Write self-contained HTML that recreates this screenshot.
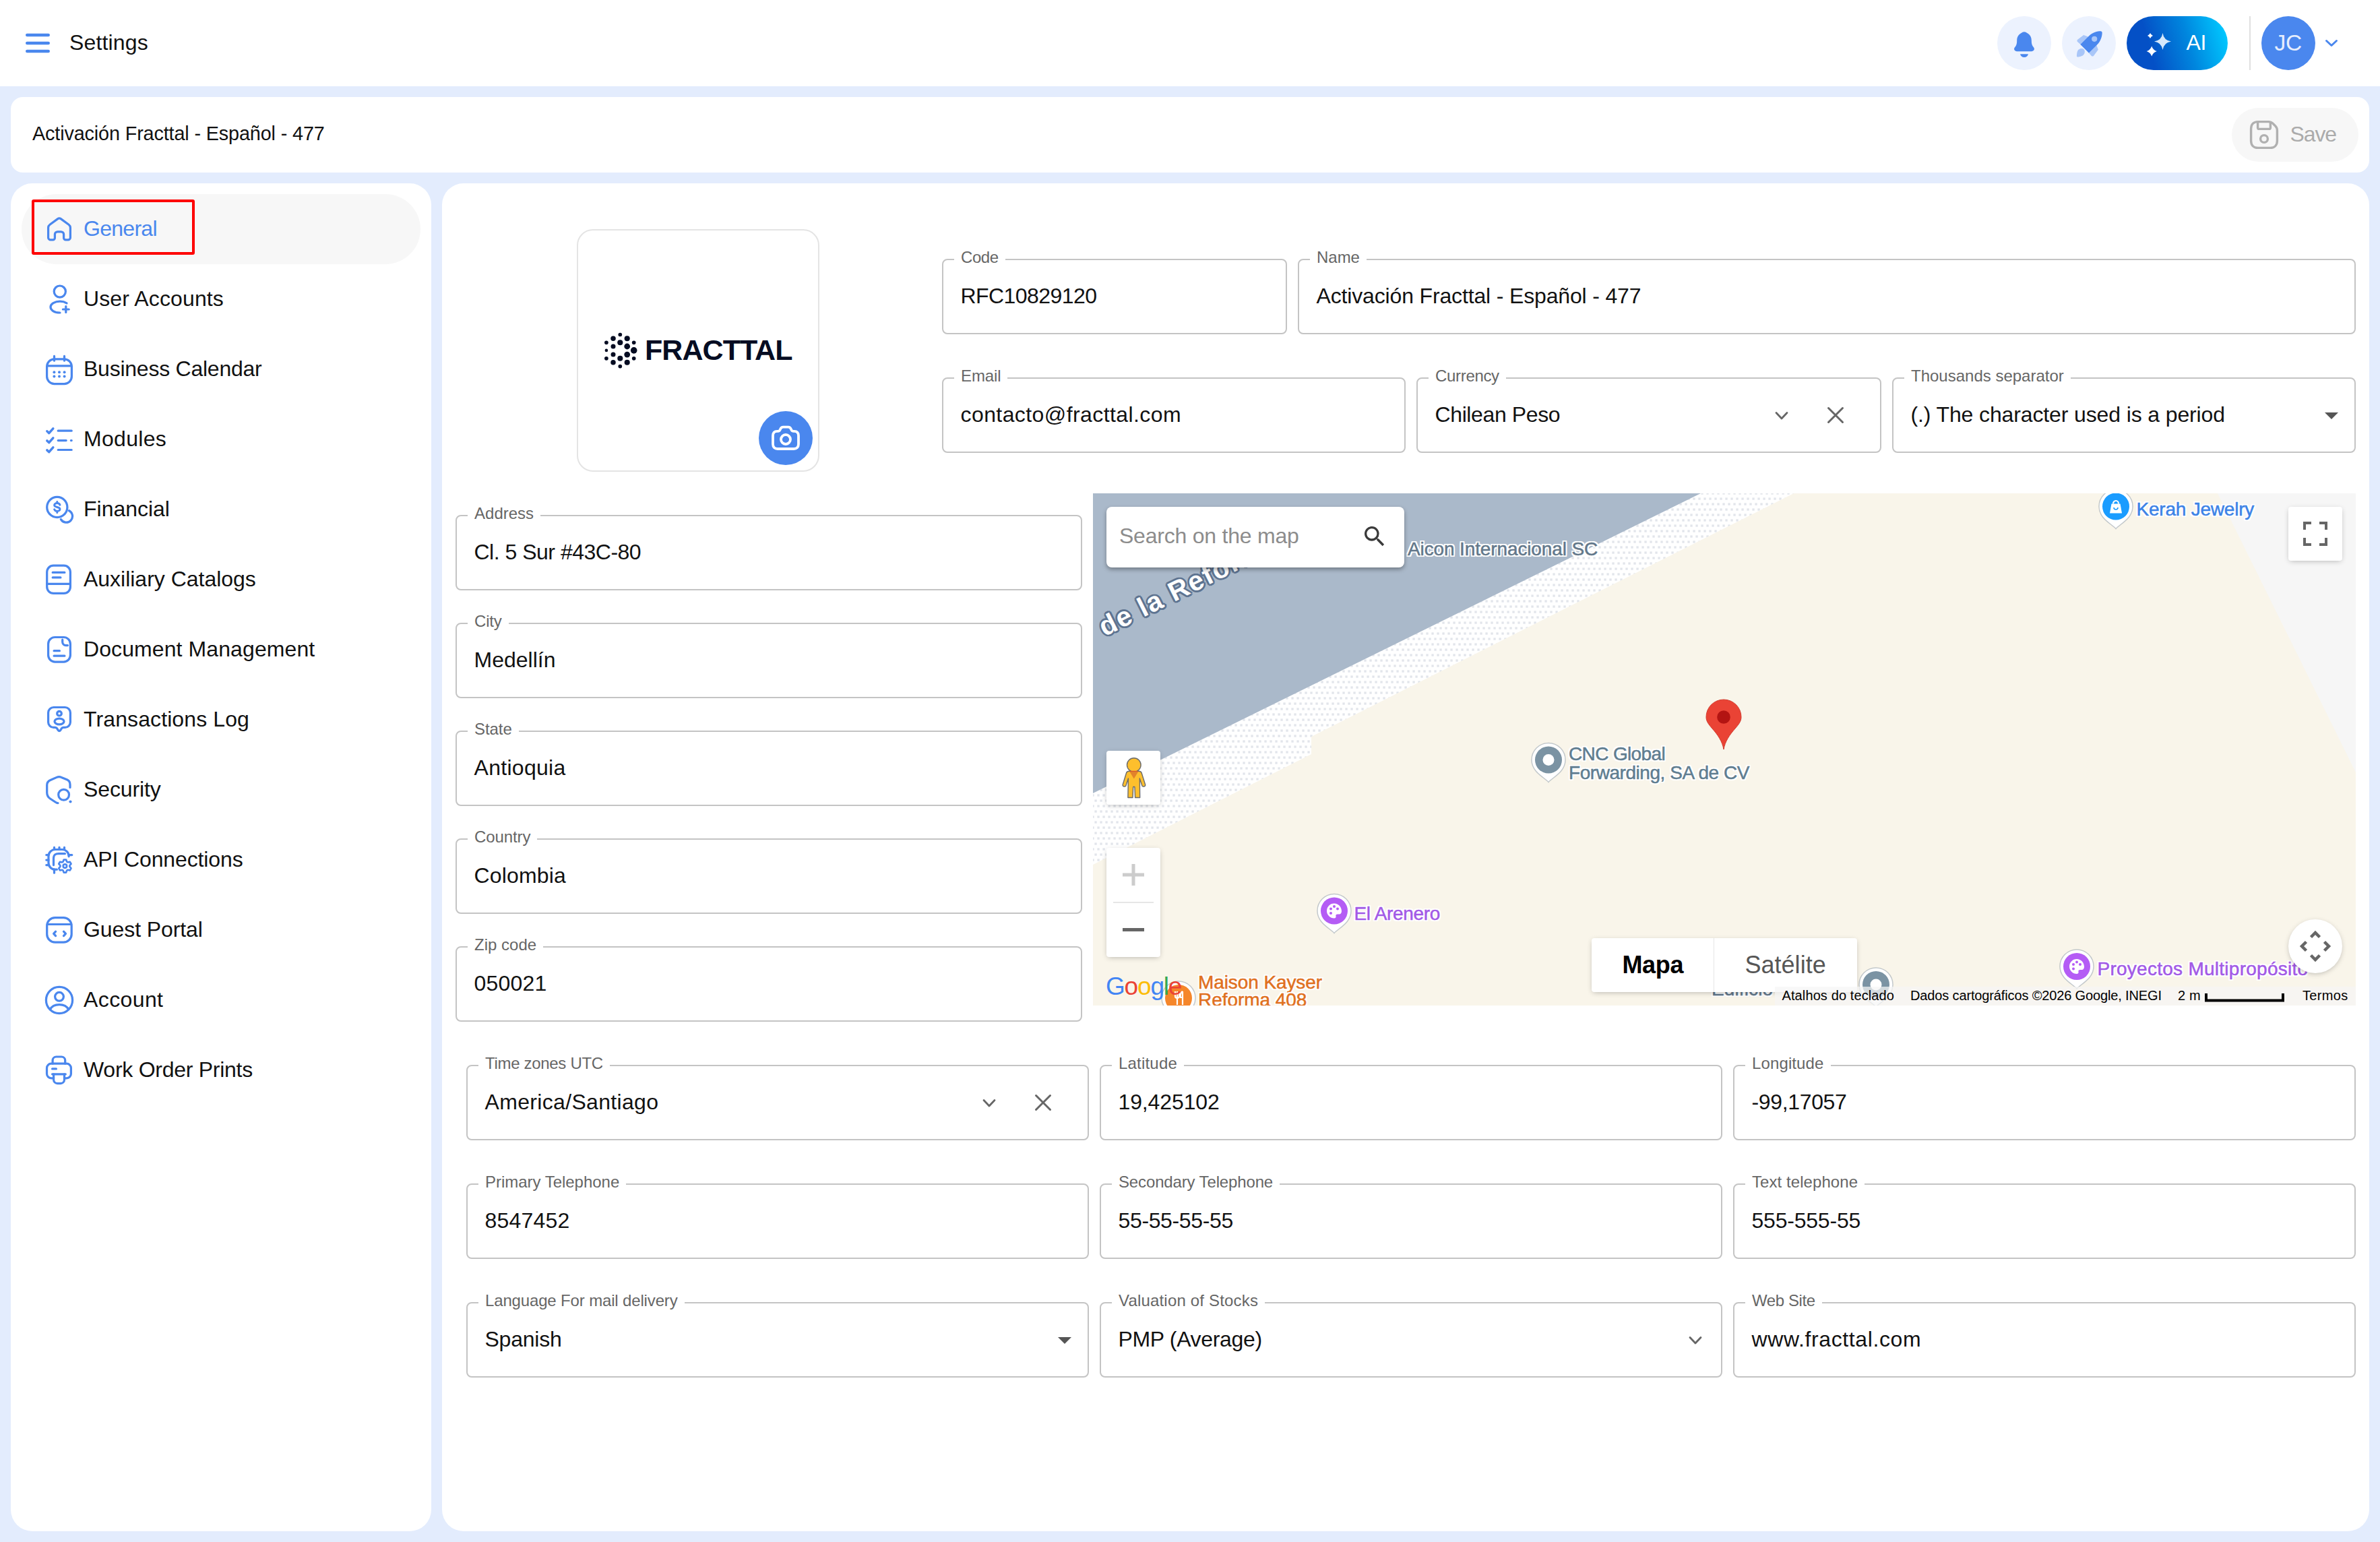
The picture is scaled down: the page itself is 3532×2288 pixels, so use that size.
<!DOCTYPE html>
<html lang="en"><head><meta charset="utf-8"><title>Settings</title>
<style>
*{box-sizing:border-box;margin:0;padding:0}
html,body{width:3532px;height:2288px;overflow:hidden;background:#e3ecfd;font-family:"Liberation Sans",sans-serif;}
.abs{position:absolute}
.t{position:absolute;white-space:pre;display:block}
.card{position:absolute;background:#fff}
.fld{position:absolute;border:2px solid #c4c4c4;border-radius:8px;height:112px}
.notch{position:absolute;background:#fff;height:6px}
svg{position:absolute;overflow:visible}
.ic{fill:none;stroke:#4a87ee;stroke-width:1.62;stroke-linecap:round;stroke-linejoin:round}
.halo{-webkit-text-stroke:0.500px currentColor;text-shadow:-2px -2px 0 #fff,2px -2px 0 #fff,-2px 2px 0 #fff,2px 2px 0 #fff,0 -2px 0 #fff,0 2px 0 #fff,-2px 0 0 #fff,2px 0 0 #fff,0 0 3px #fff}
.mbtn{position:absolute;background:#fff;box-shadow:0 2px 8px -2px rgba(0,0,0,.3);border-radius:4px}
</style></head><body>
<div class="abs" style="left:0;top:0;width:3532px;height:128px;background:#fff"></div>
<svg style="left:36px;top:46px" width="40" height="36" viewBox="0 0 40 36"><g stroke="#4a87ee" stroke-width="4.6" stroke-linecap="round"><path d="M4.3 6H35.7M4.3 18H35.7M4.3 30H35.7"/></g></svg>
<span class="t " style="left:103.0px;top:47.4px;font-size:32px;line-height:32px;color:#111; letter-spacing:0.152px;">Settings</span>
<div class="abs" style="left:2964px;top:24px;width:80px;height:80px;border-radius:50%;background:#ecf2fe"></div>
<svg style="left:2980px;top:44.500px" width="48" height="43.500" viewBox="0 0 24 24" preserveAspectRatio="none"><path fill="#4a87ee" d="M12 1.2c.9 0 1.6.5 2.2 1 2.1 1.4 3.2 3.3 3.2 6.1 0 2.400.3 3.700 1.100 4.900l.6.9c.9 1.400 0 3.100-1.700 3.100H6.600c-1.700 0-2.600-1.700-1.700-3.100l.6-.9c.8-1.200 1.100-2.500 1.100-4.900 0-2.800 1.100-4.700 3.200-6.100.6-.5 1.300-1 2.200-1z"/><path fill="#4a87ee" d="M9 19.400h6c-.3 1.600-1.500 2.700-3 2.700s-2.700-1.100-3-2.700z"/></svg>
<div class="abs" style="left:3060px;top:24px;width:80px;height:80px;border-radius:50%;background:#ecf2fe"></div>
<svg style="left:3071.500px;top:42px" width="52" height="52" viewBox="0 0 24 24">
<path fill="#a9c6f8" d="M9.300 4.600 5.200 7.700c-.5.400-.5 1.100-.1 1.500l3.100 2.800 5.800-5.700z"/>
<path fill="#a9c6f8" d="M19.300 14.600l-3.100 4.200c-.4.500-1.100.500-1.500.1l-2.800-3.100 5.700-5.800z"/>
<path fill="#a9c6f8" d="M5.600 14.800c1.300-1.300 3.100-1.200 3.900-.4.800.8.900 2.600-.4 3.900-1 1-3.500 1.300-4.100 1.300-.2 0-.4-.2-.4-.4 0-.8.100-3.400 1-4.400z"/>
<path fill="#4a87ee" d="M21.700 2.300c-.2-.2-.4-.3-.7-.3-2.200 0-5.600.8-8.100 3.300L7.100 11.100l5.800 5.800 5.800-5.800C21.200 8.600 22 5.200 22 3c0-.300-.1-.5-.3-.7z"/>
<circle cx="16.700" cy="7.300" r="1.900" fill="#a9c6f8"/></svg>
<div class="abs" style="left:3156px;top:24px;width:150px;height:80px;border-radius:40px;background:linear-gradient(74deg,#0450c6 25%,#0086de 60%,#00c8ff 95%)"></div>
<svg style="left:0;top:0" width="3532" height="128"><path fill="#d6e8fb" d="M3209.5 48.9Q3211.15 59.75 3222.0 61.4Q3211.15 63.05 3209.5 73.9Q3207.85 63.05 3197.0 61.4Q3207.85 59.75 3209.5 48.9z"/><path fill="#fff" d="M3193.2 68.4Q3195.1151999999997 74.0848 3200.7999999999997 76Q3195.1151999999997 77.9152 3193.2 83.6Q3191.2848 77.9152 3185.6 76Q3191.2848 74.0848 3193.2 68.4z"/><path fill="#fff" d="M3191 49Q3192.2 51.8 3195 53Q3192.2 54.2 3191 57Q3189.8 54.2 3187 53Q3189.8 51.8 3191 49z"/></svg>
<span class="t " style="left:3244.5px;top:46.9px;font-size:32px;line-height:32px;color:#fff; letter-spacing:-0.328px;">AI</span>
<div class="abs" style="left:3338px;top:24px;width:2px;height:80px;background:#e0e0e0"></div>
<div class="abs" style="left:3356px;top:24px;width:80px;height:80px;border-radius:50%;background:#4a87ee"></div>
<span class="t " style="left:3375.5px;top:46.8px;font-size:33.5px;line-height:33.5px;color:#e6eefd; letter-spacing:-0.328px;">JC</span>
<svg style="left:3448px;top:52px" width="24" height="24" viewBox="0 0 24 24"><path d="M4.500 8.500l7.500 7 7.500-7" fill="none" stroke="#4a87ee" stroke-width="3" stroke-linecap="round" stroke-linejoin="round"/></svg>
<div class="card" style="left:16px;top:144px;width:3500px;height:112px;border-radius:18px"></div>
<span class="t " style="left:48.0px;top:183.6px;font-size:28.8px;line-height:28.8px;color:#111; letter-spacing:-0.140px;">Activación Fracttal - Español - 477</span>
<div class="abs" style="left:3312px;top:160px;width:188px;height:80px;border-radius:40px;background:#f7f7f7"></div>
<svg style="left:3336px;top:176px" width="48" height="48" viewBox="0 0 24 24"><g fill="none" stroke="#b0b0b0" stroke-width="1.700" stroke-linejoin="round"><path d="M2.300 7.500c0-2.800 1.500-5.200 5.200-5.200h7.700c1.500 0 2.300.3 3.300 1.300l1.900 1.900c1 1 1.300 1.800 1.300 3.300v7.700c0 3.700-2.400 5.200-5.200 5.200h-9c-3.700 0-5.200-2.400-5.200-5.200z"/><path d="M7.300 2.500v4.200c0 .6.400 1 1 1h7.400c.6 0 1-.4 1-1V2.500"/><circle cx="12" cy="15" r="2.700"/></g></svg>
<span class="t " style="left:3398.5px;top:182.9px;font-size:32px;line-height:32px;color:#ababab; letter-spacing:-1.125px;">Save</span>
<div class="card" style="left:16px;top:272px;width:624px;height:2000px;border-radius:32px"></div>
<div class="abs" style="left:32px;top:288px;width:592px;height:104px;border-radius:52px;background:#f7f7f7"></div>
<div class="abs" style="left:46.500px;top:296px;width:242px;height:82px;border:4px solid #fe0000;border-radius:3px"></div>
<svg class="ic" style="left:64px;top:316px" width="48" height="48" viewBox="0 0 24 24"><path d="M10.9 4.300L5 8.600C4.200 9.200 3.800 9.900 3.800 10.900V18.200A1.750 1.750 0 0 0 5.550 19.950H7.200A1.500 1.500 0 0 0 8.700 18.450V15.900A2 2 0 0 1 10.700 13.900H13.300A2 2 0 0 1 15.300 15.900V18.450A1.500 1.500 0 0 0 16.800 19.950H18.450A1.750 1.750 0 0 0 20.200 18.200V10.900C20.200 9.900 19.800 9.200 19 8.600L13.100 4.300A1.900 1.900 0 0 0 10.900 4.300Z"/></svg>
<span class="t " style="left:124.0px;top:322.9px;font-size:32px;line-height:32px;color:#4a87ee; letter-spacing:-0.719px;">General</span>
<svg class="ic" style="left:64px;top:420px" width="48" height="48" viewBox="0 0 24 24"><circle cx="12.400" cy="6.300" r="4.300"/><path d="M17.500 14.900C16.200 14.100 14.400 13.600 12.500 13.600C8.600 13.600 5.500 15.500 5.500 17.800C5.500 20.100 8.300 22 12.500 22"/><path d="M16.900 17.300v4.400M14.700 19.500h4.400"/></svg>
<span class="t " style="left:124.0px;top:426.9px;font-size:32px;line-height:32px;color:#111; letter-spacing:0.125px;">User Accounts</span>
<svg class="ic" style="left:64px;top:524px" width="48" height="48" viewBox="0 0 24 24"><rect x="2.800" y="4.400" width="18.400" height="18.400" rx="5.500"/><path d="M8.250 5.600V2.200M15.750 5.600V2.200M3.200 9.400h17.600"/><g fill="#4a87ee" stroke="none"><circle cx="8.200" cy="14.100" r="1"/><circle cx="12" cy="14.100" r="1"/><circle cx="15.800" cy="14.100" r="1"/><circle cx="8.200" cy="17.300" r="1"/><circle cx="12" cy="17.300" r="1"/><circle cx="15.800" cy="17.300" r="1"/></g></svg>
<span class="t " style="left:124.0px;top:530.9px;font-size:32px;line-height:32px;color:#111; letter-spacing:-0.244px;">Business Calendar</span>
<svg class="ic" style="left:64px;top:628px" width="48" height="48" viewBox="0 0 24 24"><path stroke-width="1.750" d="M2.900 5.900l1.500 1.400 3-3.400M2.900 12.950l1.500 1.400 3-3.400M2.900 19.950l1.500 1.400 3-3.400"/><path d="M11.100 5.600h10M11.100 12.800h6M20.700 12.800h.4M11.100 19.750h10"/></svg>
<span class="t " style="left:124.0px;top:634.9px;font-size:32px;line-height:32px;color:#111; letter-spacing:0.312px;">Modules</span>
<svg class="ic" style="left:64px;top:732px" width="48" height="48" viewBox="0 0 24 24"><circle cx="10.400" cy="10.250" r="7.550"/><path d="M19.300 12.900A4.600 4.600 0 1 1 13.200 19.300"/><path stroke-width="1.450" d="M10.400 6.200v1M10.400 13.400v1M12.500 8.600c-.3-.85-1.100-1.350-2.100-1.350-1.200 0-2.100.65-2.100 1.550 0 2 4.200.9 4.200 2.900 0 .9-.9 1.550-2.100 1.550-1 0-1.800-.5-2.100-1.350"/></svg>
<span class="t " style="left:124.0px;top:738.9px;font-size:32px;line-height:32px;color:#111; letter-spacing:-0.014px;">Financial</span>
<svg class="ic" style="left:64px;top:836px" width="48" height="48" viewBox="0 0 24 24"><rect x="2.850" y="1.600" width="17.350" height="20.600" rx="4.800"/><path d="M7.100 6.700h8.850M7.100 10.450h5.850M2.850 15.150h17.350"/></svg>
<span class="t " style="left:124.0px;top:842.9px;font-size:32px;line-height:32px;color:#111; letter-spacing:-0.017px;">Auxiliary Catalogs</span>
<svg class="ic" style="left:64px;top:940px" width="48" height="48" viewBox="0 0 24 24"><rect x="3.800" y="2.750" width="16.400" height="18.300" rx="5"/><path d="M14.350 4.600V6.300A2.500 2.500 0 0 0 16.850 8.800H18.200M8.050 12.850h4.150M8.050 16.600h7.900"/></svg>
<span class="t " style="left:124.0px;top:946.9px;font-size:32px;line-height:32px;color:#111; letter-spacing:0.093px;">Document Management</span>
<svg class="ic" style="left:64px;top:1044px" width="48" height="48" viewBox="0 0 24 24"><path d="M7.800 2.750H16.200A4 4 0 0 1 20.200 6.750V13.700A4 4 0 0 1 16.200 17.700H15.200C14.500 17.700 14.100 17.900 13.700 18.400L12.800 19.800C12.350 20.500 11.650 20.500 11.200 19.800L10.300 18.400C9.900 17.900 9.500 17.700 8.800 17.700H7.800A4 4 0 0 1 3.800 13.700V6.750A4 4 0 0 1 7.800 2.750Z"/><circle cx="12" cy="7.350" r="1.650"/><ellipse cx="12" cy="13.250" rx="3.500" ry="2.150"/></svg>
<span class="t " style="left:124.0px;top:1050.9px;font-size:32px;line-height:32px;color:#111; letter-spacing:0.105px;">Transactions Log</span>
<svg class="ic" style="left:64px;top:1148px" width="48" height="48" viewBox="0 0 24 24"><path d="M20 10.200V8.200C20 6.200 19.600 5.300 17.900 4.550L13.600 2.700C12.300 2.100 11.400 2.100 10.100 2.700L5.400 4.800C3.700 5.550 2.850 6.600 2.850 8.500V14C2.850 16.200 3.400 17.300 5.200 18.500L9 21C9.900 21.600 10.400 21.800 11 21.800"/><circle cx="15.300" cy="15.650" r="3.950"/><path stroke-width="2.100" d="M20.250 20.750h.01"/></svg>
<span class="t " style="left:124.0px;top:1154.9px;font-size:32px;line-height:32px;color:#111; letter-spacing:-0.125px;">Security</span>
<svg class="ic" style="left:64px;top:1252px" width="48" height="48" viewBox="0 0 24 24"><path d="M19.050 9.400V9.250A5 5 0 0 0 14.050 4.250H9A5 5 0 0 0 4 9.250V14.100A5 5 0 0 0 9 19.100H10.200"/><path d="M8.250 4.250V2.650M12 4.250V2.650M15.750 4.250V2.650M4 8.300H2.400M4 12.050H2.400M4 15.800H2.400M8.250 19.100v2.500M19.050 8.300h2.350"/><path d="M16.200 7.350H11.500C8.800 7.350 7.750 8.400 7.750 11V15.800"/><circle cx="16.200" cy="16.550" r="1.350" stroke-width="1.350"/><path stroke-width="1.350" d="M14.81 13.28L15.36 11.77L17.04 11.77L17.59 13.28L18.34 13.71L19.92 13.43L20.76 14.89L19.72 16.12L19.72 16.98L20.76 18.21L19.92 19.67L18.34 19.39L17.59 19.82L17.04 21.33L15.36 21.33L14.81 19.82L14.06 19.39L12.48 19.67L11.64 18.21L12.68 16.98L12.68 16.12L11.64 14.89L12.48 13.43L14.06 13.71z"/></svg>
<span class="t " style="left:124.0px;top:1258.9px;font-size:32px;line-height:32px;color:#111; letter-spacing:-0.122px;">API Connections</span>
<svg class="ic" style="left:64px;top:1356px" width="48" height="48" viewBox="0 0 24 24"><rect x="2.850" y="2.850" width="18.250" height="18.250" rx="6"/><path d="M3.200 7.750h17.600M9.300 13.100L7.800 14.700l1.500 1.600M15.250 13.100l1.500 1.600-1.500 1.600"/></svg>
<span class="t " style="left:124.0px;top:1362.9px;font-size:32px;line-height:32px;color:#111; letter-spacing:-0.085px;">Guest Portal</span>
<svg class="ic" style="left:64px;top:1460px" width="48" height="48" viewBox="0 0 24 24"><circle cx="12" cy="12" r="9.800"/><circle cx="12" cy="9.400" r="3.200"/><path d="M5.200 18.900C6.300 16.700 8.900 15.300 12 15.300s5.700 1.400 6.800 3.600"/></svg>
<span class="t " style="left:124.0px;top:1466.9px;font-size:32px;line-height:32px;color:#111; letter-spacing:0.397px;">Account</span>
<svg class="ic" style="left:64px;top:1564px" width="48" height="48" viewBox="0 0 24 24"><path d="M7.800 17.900H6.050A3.300 3.300 0 0 1 2.750 14.600V10.400A3.300 3.300 0 0 1 6.050 7.100H17.400A3.300 3.300 0 0 1 20.700 10.400V14.600A3.300 3.300 0 0 1 17.400 17.900H15.750"/><path d="M7.050 7.100V4.700A2.700 2.700 0 0 1 9.750 2H13.650A2.700 2.700 0 0 1 16.350 4.700V7.100"/><path d="M7.800 14.900V19A2.800 2.800 0 0 0 10.600 21.800H12.950A2.800 2.800 0 0 0 15.750 19V14.900"/><path d="M6.800 14.900H16.650M6.800 10.950H9.700"/></svg>
<span class="t " style="left:124.0px;top:1570.9px;font-size:32px;line-height:32px;color:#111; letter-spacing:-0.263px;">Work Order Prints</span>
<div class="card" style="left:656px;top:272px;width:2860px;height:2000px;border-radius:32px"></div>
<div class="abs" style="left:856px;top:340px;width:360px;height:360px;border:2px solid #e4e4e4;border-radius:24px;background:#fff"></div>
<svg style="left:0;top:0" width="3532" height="2288" pointer-events="none"><circle cx="899.9" cy="508.3" r="2.85" fill="#050c22"/><circle cx="899.9" cy="519.9" r="2.30" fill="#050c22"/><circle cx="899.9" cy="531.8" r="2.85" fill="#050c22"/><circle cx="910.0" cy="502.2" r="3.75" fill="#050c22"/><circle cx="910.0" cy="514.0" r="3.50" fill="#050c22"/><circle cx="910.0" cy="526.1" r="3.50" fill="#050c22"/><circle cx="910.0" cy="537.8" r="3.75" fill="#050c22"/><circle cx="920.3" cy="496.5" r="2.85" fill="#050c22"/><circle cx="920.3" cy="508.3" r="4.05" fill="#050c22"/><circle cx="920.3" cy="531.8" r="4.05" fill="#050c22"/><circle cx="920.3" cy="543.6" r="2.85" fill="#050c22"/><circle cx="930.7" cy="502.2" r="4.05" fill="#050c22"/><circle cx="930.7" cy="514.0" r="4.40" fill="#050c22"/><circle cx="930.7" cy="526.1" r="4.40" fill="#050c22"/><circle cx="930.7" cy="537.8" r="4.05" fill="#050c22"/><circle cx="940.7" cy="508.3" r="2.85" fill="#050c22"/><circle cx="940.7" cy="519.9" r="4.80" fill="#050c22"/><circle cx="940.7" cy="531.8" r="2.85" fill="#050c22"/></svg>
<span class="t" style="left:957px;top:498.2px;font-size:43px;line-height:43px;font-weight:700;color:#050c22;letter-spacing:-0.950px">FRACTTAL</span>
<div class="abs" style="left:1126px;top:610px;width:80px;height:80px;border-radius:50%;background:#4a87ee"></div>
<svg style="left:1142px;top:626px" width="48" height="48" viewBox="0 0 24 24"><g fill="none" stroke="#fff" stroke-width="1.900" stroke-linejoin="round" stroke-linecap="round"><path d="M2.500 10.200c0-2 1.100-3.300 3.100-3.300h.6c.7 0 1.300-.4 1.600-1l.3-.7c.4-.9 1-1.400 2-1.400h3.800c1 0 1.600.5 2 1.400l.3.700c.3.600.9 1 1.600 1h.6c2 0 3.100 1.300 3.100 3.300v6.300c0 2.200-1.300 3.500-3.500 3.500H6c-2.200 0-3.500-1.300-3.500-3.500z"/><circle cx="12" cy="13" r="3.500"/></g></svg>
<div class="fld" style="left:1398px;top:384px;width:512px"></div>
<div class="notch" style="left:1416px;top:382px;width:75.6px"></div>
<span class="t " style="left:1426.0px;top:369.7px;font-size:24px;line-height:24px;color:#666; letter-spacing:-0.449px;">Code</span>
<span class="t " style="left:1425.5px;top:422.9px;font-size:32px;line-height:32px;color:#111; letter-spacing:-0.548px;">RFC10829120</span>
<div class="fld" style="left:1926px;top:384px;width:1570px"></div>
<div class="notch" style="left:1944px;top:382px;width:84.0px"></div>
<span class="t " style="left:1954.0px;top:369.7px;font-size:24px;line-height:24px;color:#666; letter-spacing:-0.020px;">Name</span>
<span class="t " style="left:1953.5px;top:422.9px;font-size:32px;line-height:32px;color:#111; letter-spacing:-0.155px;">Activación Fracttal - Español - 477</span>
<div class="fld" style="left:1398px;top:560px;width:688px"></div>
<div class="notch" style="left:1416px;top:558px;width:79.4px"></div>
<span class="t " style="left:1426.0px;top:545.7px;font-size:24px;line-height:24px;color:#666; letter-spacing:-0.119px;">Email</span>
<span class="t " style="left:1425.5px;top:598.9px;font-size:32px;line-height:32px;color:#111; letter-spacing:0.416px;">contacto@fracttal.com</span>
<div class="fld" style="left:2102px;top:560px;width:690px"></div>
<div class="notch" style="left:2120px;top:558px;width:114.8px"></div>
<span class="t " style="left:2130.0px;top:545.7px;font-size:24px;line-height:24px;color:#666; letter-spacing:-0.320px;">Currency</span>
<span class="t " style="left:2129.5px;top:598.9px;font-size:32px;line-height:32px;color:#111; letter-spacing:-0.385px;">Chilean Peso</span>
<svg style="left:2632.0px;top:609.0px" width="24" height="16" viewBox="0 0 24 16"><path d="M4 3.500l8 8.500 8-8.500" fill="none" stroke="#666" stroke-width="2.800" stroke-linecap="round" stroke-linejoin="round"/></svg>
<svg style="left:2710.0px;top:602.0px" width="28" height="28" viewBox="0 0 28 28"><path d="M3.500 3.500l21 21M24.500 3.500l-21 21" fill="none" stroke="#666" stroke-width="3" stroke-linecap="round"/></svg>
<div class="fld" style="left:2808px;top:560px;width:688px"></div>
<div class="notch" style="left:2826px;top:558px;width:246.8px"></div>
<span class="t " style="left:2836.0px;top:545.7px;font-size:24px;line-height:24px;color:#666; letter-spacing:0.001px;">Thousands separator</span>
<span class="t " style="left:2835.5px;top:598.9px;font-size:32px;line-height:32px;color:#111; letter-spacing:-0.128px;">(.) The character used is a period</span>
<svg style="left:3450.0px;top:612.0px" width="20" height="10" viewBox="0 0 20 10"><path d="M0 0h20L10 10z" fill="#555"/></svg>
<div class="fld" style="left:676px;top:764px;width:930px"></div>
<div class="notch" style="left:694px;top:762px;width:108.1px"></div>
<span class="t " style="left:704.0px;top:749.7px;font-size:24px;line-height:24px;color:#666; letter-spacing:0.013px;">Address</span>
<span class="t " style="left:703.5px;top:802.9px;font-size:32px;line-height:32px;color:#111; letter-spacing:-0.499px;">Cl. 5 Sur #43C-80</span>
<div class="fld" style="left:676px;top:924px;width:930px"></div>
<div class="notch" style="left:694px;top:922px;width:60.7px"></div>
<span class="t " style="left:704.0px;top:909.7px;font-size:24px;line-height:24px;color:#666; letter-spacing:-0.168px;">City</span>
<span class="t " style="left:703.5px;top:962.9px;font-size:32px;line-height:32px;color:#111; letter-spacing:0.016px;">Medellín</span>
<div class="fld" style="left:676px;top:1084px;width:930px"></div>
<div class="notch" style="left:694px;top:1082px;width:75.7px"></div>
<span class="t " style="left:704.0px;top:1069.7px;font-size:24px;line-height:24px;color:#666; letter-spacing:-0.062px;">State</span>
<span class="t " style="left:703.5px;top:1122.9px;font-size:32px;line-height:32px;color:#111; letter-spacing:0.292px;">Antioquia</span>
<div class="fld" style="left:676px;top:1244px;width:930px"></div>
<div class="notch" style="left:694px;top:1242px;width:103.3px"></div>
<span class="t " style="left:704.0px;top:1229.7px;font-size:24px;line-height:24px;color:#666; letter-spacing:-0.100px;">Country</span>
<span class="t " style="left:703.5px;top:1282.9px;font-size:32px;line-height:32px;color:#111; letter-spacing:0.145px;">Colombia</span>
<div class="fld" style="left:676px;top:1404px;width:930px"></div>
<div class="notch" style="left:694px;top:1402px;width:112.2px"></div>
<span class="t " style="left:704.0px;top:1389.7px;font-size:24px;line-height:24px;color:#666; letter-spacing:0.012px;">Zip code</span>
<span class="t " style="left:703.5px;top:1442.9px;font-size:32px;line-height:32px;color:#111; letter-spacing:0.188px;">050021</span>
<div class="fld" style="left:692px;top:1580px;width:924px"></div>
<div class="notch" style="left:710px;top:1578px;width:194.8px"></div>
<span class="t " style="left:720.0px;top:1565.7px;font-size:24px;line-height:24px;color:#666; letter-spacing:-0.311px;">Time zones UTC</span>
<span class="t " style="left:719.5px;top:1618.9px;font-size:32px;line-height:32px;color:#111; letter-spacing:0.329px;">America/Santiago</span>
<svg style="left:1456.0px;top:1629.0px" width="24" height="16" viewBox="0 0 24 16"><path d="M4 3.500l8 8.500 8-8.500" fill="none" stroke="#666" stroke-width="2.800" stroke-linecap="round" stroke-linejoin="round"/></svg>
<svg style="left:1534.0px;top:1622.0px" width="28" height="28" viewBox="0 0 28 28"><path d="M3.500 3.500l21 21M24.500 3.500l-21 21" fill="none" stroke="#666" stroke-width="3" stroke-linecap="round"/></svg>
<div class="fld" style="left:1632px;top:1580px;width:924px"></div>
<div class="notch" style="left:1650px;top:1578px;width:107.0px"></div>
<span class="t " style="left:1660.0px;top:1565.7px;font-size:24px;line-height:24px;color:#666; letter-spacing:0.201px;">Latitude</span>
<span class="t " style="left:1659.5px;top:1618.9px;font-size:32px;line-height:32px;color:#111; letter-spacing:-0.122px;">19,425102</span>
<div class="fld" style="left:2572px;top:1580px;width:924px"></div>
<div class="notch" style="left:2590px;top:1578px;width:126.5px"></div>
<span class="t " style="left:2600.0px;top:1565.7px;font-size:24px;line-height:24px;color:#666; letter-spacing:0.122px;">Longitude</span>
<span class="t " style="left:2599.5px;top:1618.9px;font-size:32px;line-height:32px;color:#111; letter-spacing:-0.344px;">-99,17057</span>
<div class="fld" style="left:692px;top:1756px;width:924px"></div>
<div class="notch" style="left:710px;top:1754px;width:219.2px"></div>
<span class="t " style="left:720.0px;top:1741.7px;font-size:24px;line-height:24px;color:#666; letter-spacing:-0.027px;">Primary Telephone</span>
<span class="t " style="left:719.5px;top:1794.9px;font-size:32px;line-height:32px;color:#111; letter-spacing:0.188px;">8547452</span>
<div class="fld" style="left:1632px;top:1756px;width:924px"></div>
<div class="notch" style="left:1650px;top:1754px;width:249.1px"></div>
<span class="t " style="left:1660.0px;top:1741.7px;font-size:24px;line-height:24px;color:#666; letter-spacing:-0.141px;">Secondary Telephone</span>
<span class="t " style="left:1659.5px;top:1794.9px;font-size:32px;line-height:32px;color:#111; letter-spacing:-0.358px;">55-55-55-55</span>
<div class="fld" style="left:2572px;top:1756px;width:924px"></div>
<div class="notch" style="left:2590px;top:1754px;width:177.1px"></div>
<span class="t " style="left:2600.0px;top:1741.7px;font-size:24px;line-height:24px;color:#666; letter-spacing:0.070px;">Text telephone</span>
<span class="t " style="left:2599.5px;top:1794.9px;font-size:32px;line-height:32px;color:#111; letter-spacing:-0.212px;">555-555-55</span>
<div class="fld" style="left:692px;top:1932px;width:924px"></div>
<div class="notch" style="left:710px;top:1930px;width:305.5px"></div>
<span class="t " style="left:720.0px;top:1917.7px;font-size:24px;line-height:24px;color:#666; letter-spacing:-0.153px;">Language For mail delivery</span>
<span class="t " style="left:719.5px;top:1970.9px;font-size:32px;line-height:32px;color:#111; letter-spacing:-0.239px;">Spanish</span>
<svg style="left:1570.0px;top:1984.0px" width="20" height="10" viewBox="0 0 20 10"><path d="M0 0h20L10 10z" fill="#555"/></svg>
<div class="fld" style="left:1632px;top:1932px;width:924px"></div>
<div class="notch" style="left:1650px;top:1930px;width:227.2px"></div>
<span class="t " style="left:1660.0px;top:1917.7px;font-size:24px;line-height:24px;color:#666; letter-spacing:0.183px;">Valuation of Stocks</span>
<span class="t " style="left:1659.5px;top:1970.9px;font-size:32px;line-height:32px;color:#111; letter-spacing:-0.332px;">PMP (Average)</span>
<svg style="left:2504.0px;top:1981.0px" width="24" height="16" viewBox="0 0 24 16"><path d="M4 3.500l8 8.500 8-8.500" fill="none" stroke="#666" stroke-width="2.800" stroke-linecap="round" stroke-linejoin="round"/></svg>
<div class="fld" style="left:2572px;top:1932px;width:924px"></div>
<div class="notch" style="left:2590px;top:1930px;width:113.8px"></div>
<span class="t " style="left:2600.0px;top:1917.7px;font-size:24px;line-height:24px;color:#666; letter-spacing:-0.398px;">Web Site</span>
<span class="t " style="left:2599.5px;top:1970.9px;font-size:32px;line-height:32px;color:#111; letter-spacing:0.621px;">www.fracttal.com</span>
<div class="abs" id="map" style="left:1622px;top:732px;width:1874px;height:760px;overflow:hidden;background:#f9f5ea">
<svg style="left:0;top:0" width="1874" height="760" viewBox="1622 732 1874 760"><defs><pattern id="dots" x="1620" y="730" width="8" height="16" patternUnits="userSpaceOnUse"><rect width="8" height="16" fill="#fff"/><rect x="0.400" y="0.400" width="3.300" height="3.300" fill="#e2e5eb"/><rect x="4.400" y="8.400" width="3.300" height="3.300" fill="#e2e5eb"/></pattern></defs><polygon points="1622,732 2662,732 1946,1093 1946,1119 1622,1283" fill="url(#dots)"/><polygon points="1622,732 2524,732 1622,1177" fill="#aab9ca"/><polygon points="3291,732 3496,732 3496,1146" fill="#f6f6f6"/></svg>
<span class="t" style="left:20px;top:178px;font-size:40.500px;line-height:40px;font-weight:700;color:#fff;transform-origin:0 100%;transform:rotate(-26.500deg);letter-spacing:1.900px;text-shadow:-2px -2px 0 #5d7390,2px -2px 0 #5d7390,-2px 2px 0 #5d7390,2px 2px 0 #5d7390,0 -3px 0 #5d7390,0 3px 0 #5d7390,-3px 0 0 #5d7390,3px 0 0 #5d7390">de la Reforma</span>
<span class="t halo" style="left:918.0px;top:722.3px;font-size:28px;line-height:28px;color:#62778a; letter-spacing:0.119px;">Edificio</span>
</div>
<svg style="left:1622px;top:732px" width="1874" height="760" viewBox="1622 732 1874 760"><clipPath id="mc"><rect x="1622" y="732" width="1874" height="760"/></clipPath><g clip-path="url(#mc)"><g transform="translate(3140 751.5)"><path d="M0 33C-6 26 -25 18 -25 0A25 25 0 1 1 25 0C25 18 6 26 0 33z" fill="#fff" stroke="rgba(90,110,130,.35)" stroke-width="1.500"/><circle r="20" fill="#1a9cff"/><path d="M-9 10L-6.500-4h13L9 10z" fill="#fff"/><path d="M-4-4a4 4.500 0 0 1 8 0" fill="none" stroke="#fff" stroke-width="2.200"/><path d="M-3 1.500a3 3 0 0 0 6 0" fill="none" stroke="#1a9cff" stroke-width="1.600"/></g><g transform="translate(2298 1127.5)"><path d="M0 33C-6 26 -25 18 -25 0A25 25 0 1 1 25 0C25 18 6 26 0 33z" fill="#fff" stroke="rgba(90,110,130,.35)" stroke-width="1.500"/><circle r="20" fill="#7b93a3"/><circle r="8.500" fill="#fff"/></g><g transform="translate(1980 1351.5)"><path d="M0 33C-6 26 -25 18 -25 0A25 25 0 1 1 25 0C25 18 6 26 0 33z" fill="#fff" stroke="rgba(90,110,130,.35)" stroke-width="1.500"/><circle r="20" fill="#b45cf5"/><g fill="#fff"><path d="M0-11a11 11 0 1 0 0 22c2 0 3-1.500 2.500-3-.5-1.800.5-3 2.500-3h2.500c2 0 3.500-2 3.500-4.500C11-6 6-11 0-11z"/></g><g fill="#b45cf5"><circle cx="-5" cy="-3" r="2"/><circle cx="0" cy="-6.500" r="2"/><circle cx="5" cy="-3" r="2"/><circle cx="-5" cy="3.500" r="2"/></g></g><g transform="translate(3082 1434)"><path d="M0 33C-6 26 -25 18 -25 0A25 25 0 1 1 25 0C25 18 6 26 0 33z" fill="#fff" stroke="rgba(90,110,130,.35)" stroke-width="1.500"/><circle r="20" fill="#b45cf5"/><g fill="#fff"><path d="M0-11a11 11 0 1 0 0 22c2 0 3-1.500 2.500-3-.5-1.800.5-3 2.500-3h2.500c2 0 3.500-2 3.500-4.500C11-6 6-11 0-11z"/></g><g fill="#b45cf5"><circle cx="-5" cy="-3" r="2"/><circle cx="0" cy="-6.500" r="2"/><circle cx="5" cy="-3" r="2"/><circle cx="-5" cy="3.500" r="2"/></g></g><g transform="translate(2784 1461)"><path d="M0 33C-6 26 -25 18 -25 0A25 25 0 1 1 25 0C25 18 6 26 0 33z" fill="#fff" stroke="rgba(90,110,130,.35)" stroke-width="1.500"/><circle r="20" fill="#7b93a3"/><circle r="8.500" fill="#fff"/></g><g transform="translate(1749 1481)"><path d="M0 33C-6 26 -25 18 -25 0A25 25 0 1 1 25 0C25 18 6 26 0 33z" fill="#fff" stroke="rgba(90,110,130,.35)" stroke-width="1.500"/><circle r="20" fill="#f5862a"/><path d="M-5-10v7a3 3 0 0 0 6 0v-7M-2-10v20M6-10v20M6-10c-3 1-3.500 6-3 9h3" fill="none" stroke="#fff" stroke-width="2.200"/></g><g transform="translate(2558 1112)"><path d="M0 0C-2-12-9-22-17-31C-23-38-26-42-26-48.200A26 25.800 0 0 1 26-48.200C26-42 23-38 17-31C9-22 2-12 0 0z" fill="#ea4335" stroke="#d23c2f" stroke-width="1"/><circle cy="-48" r="9.800" fill="#b31412"/></g></g></svg>
<span class="t halo" style="left:2089.0px;top:800.8px;font-size:28px;line-height:28px;color:#62778a; letter-spacing:-0.124px;">Aicon Internacional SC</span>
<span class="t halo" style="left:3170.5px;top:741.8px;font-size:28px;line-height:28px;color:#3b82e6; letter-spacing:-0.218px;">Kerah Jewelry</span>
<span class="t halo" style="left:2328.0px;top:1104.8px;font-size:28px;line-height:28px;color:#5f7d90; letter-spacing:-0.641px;">CNC Global</span>
<span class="t halo" style="left:2328.0px;top:1132.8px;font-size:28px;line-height:28px;color:#5f7d90; letter-spacing:-0.447px;">Forwarding, SA de CV</span>
<span class="t halo" style="left:2009.5px;top:1342.3px;font-size:28px;line-height:28px;color:#a259e6; letter-spacing:-0.323px;">El Arenero</span>
<span class="t halo" style="left:3112.5px;top:1424.3px;font-size:28px;line-height:28px;color:#a259e6; letter-spacing:0.261px;">Proyectos Multipropósito</span>
<div class="abs" style="left:1622px;top:1430px;width:400px;height:62px;overflow:hidden"><span class="t halo" style="left:156.0px;top:13.8px;font-size:28px;line-height:28px;color:#e0701e; letter-spacing:-0.095px;">Maison Kayser</span><span class="t halo" style="left:156.0px;top:39.8px;font-size:28px;line-height:28px;color:#e0701e; letter-spacing:-0.058px;">Reforma 408</span></div>
<div class="mbtn" style="left:1642px;top:752px;width:442px;height:90px;border-radius:8px;box-shadow:0 3px 6px rgba(0,0,0,.35)"></div>
<span class="t " style="left:1661.0px;top:778.9px;font-size:32px;line-height:32px;color:#8c8c8c; letter-spacing:-0.227px;">Search on the map</span>
<svg style="left:2020px;top:776px" width="40" height="40" viewBox="0 0 24 24"><path fill="#3a3a3a" d="M15.500 14h-.79l-.28-.27A6.470 6.470 0 0 0 16 9.500 6.500 6.500 0 1 0 9.500 16c1.610 0 3.090-.59 4.230-1.570l.27.28v.79l5 4.990L20.490 19zm-6 0C7.010 14 5 11.990 5 9.500S7.010 5 9.500 5 14 7.010 14 9.500 11.990 14 9.500 14z"/></svg>
<div class="mbtn" style="left:3396px;top:752px;width:80px;height:80px"></div>
<svg style="left:3418px;top:774px" width="36" height="36" viewBox="0 0 36 36"><path d="M2 12V2h10M24 2h10v10M34 24v10h-10M12 34H2v-10" fill="none" stroke="#666" stroke-width="4"/></svg>
<div class="mbtn" style="left:1642px;top:1114px;width:80px;height:80px"></div>
<svg style="left:1664px;top:1124px" width="38" height="62" viewBox="0 0 38 62"><g stroke="#6b6b6b" stroke-width="1.400" stroke-linejoin="round"><path d="M12 20.200H25.600C28 20.200 29.600 21 30.200 23L35.700 40.500C36 42 34.500 43.200 33 43L31.200 42.600L27.300 31L27.700 59.500H20.600L19.900 43.500H17.700L17 59.500H9.900L10.400 31L6.600 42.600L4.800 43C3.300 43.200 1.800 42 2.100 40.500L7.500 23C8.100 21 9.600 20.200 12 20.200Z" fill="#fdbf2d"/><circle cx="18.800" cy="11" r="10.300" fill="#fdbf2d"/></g><path d="M12.400 20.900h12.800L18.800 31.500z" fill="#e1832b"/><path d="M12.400 20.900h12.800l-1.200-1.200h-10.400z" fill="#d9572b"/></svg>
<div class="mbtn" style="left:1642px;top:1258px;width:80px;height:162px"></div>
<div class="abs" style="left:1652px;top:1338px;width:60px;height:2px;background:#e6e6e6"></div>
<svg style="left:1666px;top:1282px" width="32" height="32" viewBox="0 0 32 32"><path d="M16 0v32M0 16h32" stroke="#ccc" stroke-width="5" fill="none"/></svg>
<div class="abs" style="left:1666px;top:1377px;width:32px;height:5px;background:#666"></div>
<span class="t" style="left:1641px;top:1444.7px;font-size:37px;line-height:37px;letter-spacing:-1.200px;"><span style="color:#4285f4">G</span><span style="color:#ea4335">o</span><span style="color:#fbbc05">o</span><span style="color:#4285f4">g</span><span style="color:#34a853">l</span><span style="color:#ea4335">e</span></span>
<div class="mbtn" style="left:2362px;top:1392px;width:394px;height:80px"></div>
<div class="abs" style="left:2543px;top:1392px;width:1px;height:80px;background:#e6e6e6"></div>
<span class="t " style="left:2407.5px;top:1413.5px;font-size:36px;line-height:36px;color:#000;font-weight:700; letter-spacing:-0.375px;">Mapa</span>
<span class="t " style="left:2589.5px;top:1413.5px;font-size:36px;line-height:36px;color:#565656; letter-spacing:0.016px;">Satélite</span>
<div class="abs" style="left:3396px;top:1364px;width:80px;height:80px;border-radius:50%;background:#fff;box-shadow:0 2px 8px -2px rgba(0,0,0,.3)"></div>
<svg style="left:3412px;top:1380px" width="48" height="48" viewBox="0 0 48 48"><path d="M17.500 10.500L24 4l6.500 6.500M17.500 37.500L24 44l6.500-6.500M10.500 17.500L4 24l6.500 6.500M37.500 17.500L44 24l-6.500 6.500" fill="none" stroke="#666" stroke-width="4.500"/></svg>
<div class="abs" style="left:2634px;top:1464px;width:862px;height:28px;background:rgba(245,245,245,.72)"></div>
<span class="t " style="left:2644.5px;top:1466.6px;font-size:20px;line-height:20px;color:#000; letter-spacing:0.111px;">Atalhos do teclado</span>
<span class="t " style="left:2835.0px;top:1466.6px;font-size:20px;line-height:20px;color:#000; letter-spacing:-0.138px;">Dados cartográficos ©2026 Google, INEGI</span>
<span class="t " style="left:3232.0px;top:1467.1px;font-size:20px;line-height:20px;color:#000; letter-spacing:0.135px;">2 m</span>
<svg style="left:3272px;top:1473px" width="118" height="14" viewBox="0 0 118 14"><path d="M2 1v10.500h114V1" fill="none" stroke="#000" stroke-width="4"/></svg>
<span class="t " style="left:3417.0px;top:1466.6px;font-size:20px;line-height:20px;color:#000; letter-spacing:0.341px;">Termos</span>
</body></html>
